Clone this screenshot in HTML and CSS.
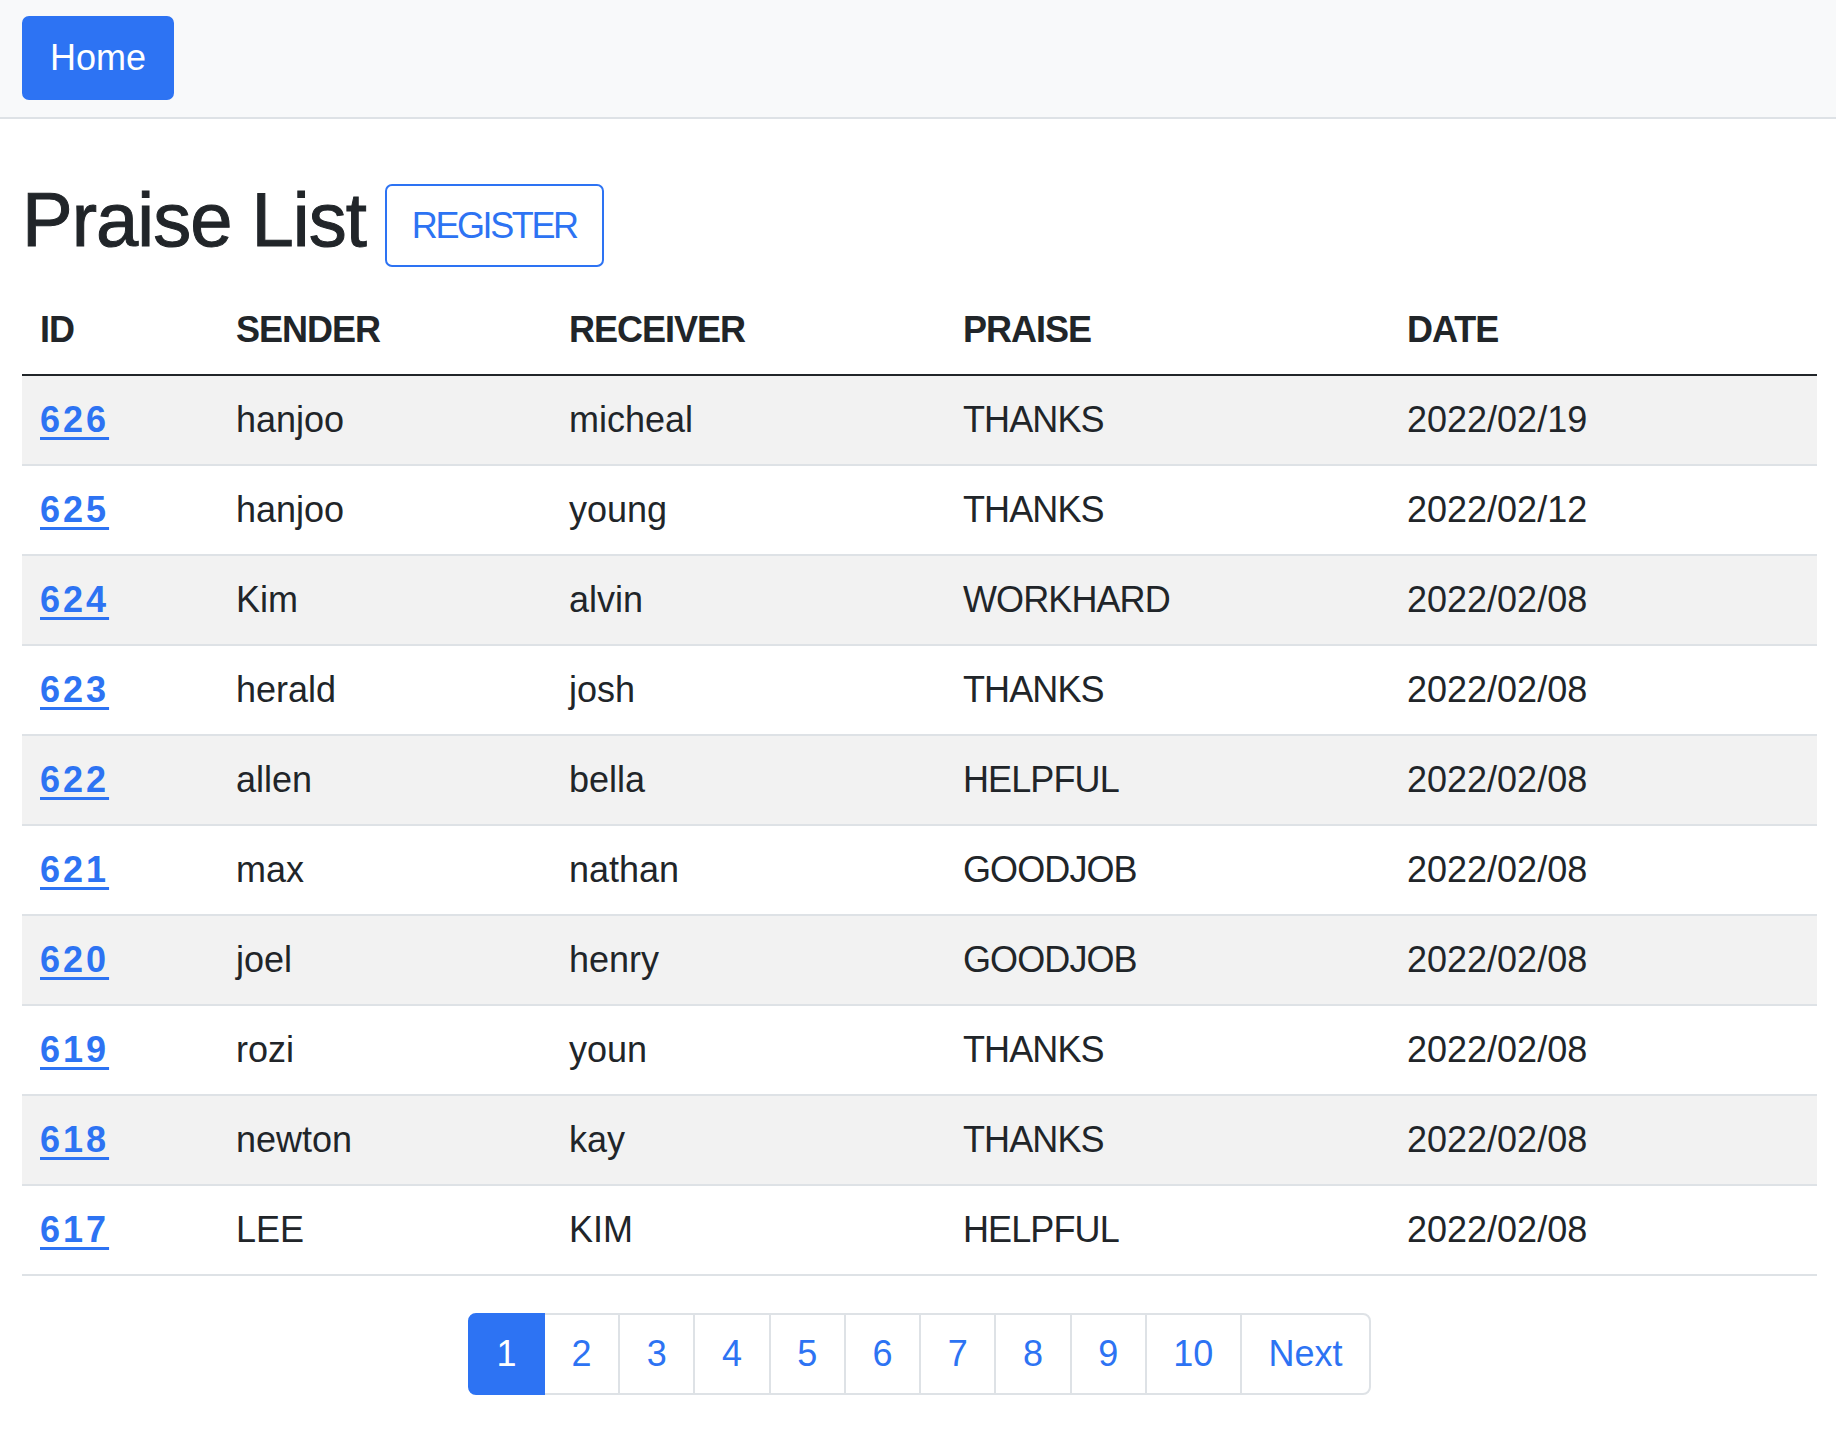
FILE: index.html
```html
<!DOCTYPE html>
<html lang="en">
<head>
<meta charset="utf-8">
<title>Praise List</title>
<link rel="stylesheet" href="styles.css">
</head>
<body>
<nav class="navbar">
  <a class="btn btn-primary" href="#">Home</a>
</nav>
<main class="container">
  <div class="title-row">
    <h2 class="title">Praise List</h2>
    <a class="btn btn-outline" href="#">REGISTER</a>
  </div>
  <table class="table">
    <colgroup>
      <col class="c-id"><col class="c-sender"><col class="c-receiver"><col class="c-praise"><col class="c-date">
    </colgroup>
    <thead>
      <tr><th>ID</th><th>SENDER</th><th>RECEIVER</th><th>PRAISE</th><th>DATE</th></tr>
    </thead>
    <tbody>
      <tr><td class="id"><a href="#">626</a></td><td>hanjoo</td><td>micheal</td><td class="praise">THANKS</td><td>2022/02/19</td></tr>
      <tr><td class="id"><a href="#">625</a></td><td>hanjoo</td><td>young</td><td class="praise">THANKS</td><td>2022/02/12</td></tr>
      <tr><td class="id"><a href="#">624</a></td><td>Kim</td><td>alvin</td><td class="praise">WORKHARD</td><td>2022/02/08</td></tr>
      <tr><td class="id"><a href="#">623</a></td><td>herald</td><td>josh</td><td class="praise">THANKS</td><td>2022/02/08</td></tr>
      <tr><td class="id"><a href="#">622</a></td><td>allen</td><td>bella</td><td class="praise">HELPFUL</td><td>2022/02/08</td></tr>
      <tr><td class="id"><a href="#">621</a></td><td>max</td><td>nathan</td><td class="praise">GOODJOB</td><td>2022/02/08</td></tr>
      <tr><td class="id"><a href="#">620</a></td><td>joel</td><td>henry</td><td class="praise">GOODJOB</td><td>2022/02/08</td></tr>
      <tr><td class="id"><a href="#">619</a></td><td>rozi</td><td>youn</td><td class="praise">THANKS</td><td>2022/02/08</td></tr>
      <tr><td class="id"><a href="#">618</a></td><td>newton</td><td>kay</td><td class="praise">THANKS</td><td>2022/02/08</td></tr>
      <tr><td class="id"><a href="#">617</a></td><td>LEE</td><td>KIM</td><td class="praise">HELPFUL</td><td>2022/02/08</td></tr>
    </tbody>
  </table>
  <ul class="pagination">
    <li class="page-item active"><a class="page-link" href="#">1</a></li>
    <li class="page-item"><a class="page-link" href="#">2</a></li>
    <li class="page-item"><a class="page-link" href="#">3</a></li>
    <li class="page-item"><a class="page-link" href="#">4</a></li>
    <li class="page-item"><a class="page-link" href="#">5</a></li>
    <li class="page-item"><a class="page-link" href="#">6</a></li>
    <li class="page-item"><a class="page-link" href="#">7</a></li>
    <li class="page-item"><a class="page-link" href="#">8</a></li>
    <li class="page-item"><a class="page-link" href="#">9</a></li>
    <li class="page-item"><a class="page-link" href="#">10</a></li>
    <li class="page-item"><a class="page-link" href="#">Next</a></li>
  </ul>
</main>
</body>
</html>
```

FILE: styles.css
```css
* { box-sizing: border-box; }

html, body {
  margin: 0;
  padding: 0;
  background: #ffffff;
  color: #212529;
  font-family: "Liberation Sans", Arial, sans-serif;
  font-size: 36px;
  line-height: 54px;
}

.navbar {
  display: flex;
  align-items: center;
  padding: 16px 22px 17px 22px;
  background: #f8f9fa;
  border-bottom: 2px solid #dee2e6;
}

.btn {
  display: inline-block;
  font-size: 36px;
  line-height: 55px;
  text-decoration: none;
  border: 2px solid transparent;
  border-radius: 7px;
  padding: 12px 26px;
}

.btn-primary {
  background: #2d73f3;
  border-color: #2d73f3;
  color: #ffffff;
  padding: 12px 26px 13px 26px;
}

.btn-outline {
  background: #ffffff;
  border-color: #2d73f3;
  color: #2d73f3;
  letter-spacing: -2.4px;
  padding: 12px 25px 12px 25px;
}

.container {
  padding: 0 19px 0 22px;
}

.title-row {
  display: flex;
  align-items: flex-start;
  gap: 19px;
  margin-top: 55px;
  margin-bottom: 18px;
}

.title {
  margin: 0;
  font-size: 76px;
  line-height: 91px;
  font-weight: 400;
  letter-spacing: -1px;
  -webkit-text-stroke: 1px #212529;
  color: #212529;
}

.title-row .btn-outline {
  margin-top: 10px;
}

.table {
  width: 100%;
  table-layout: fixed;
  border-collapse: collapse;
  margin: 0;
}

.c-id { width: 196px; }
.c-sender { width: 333px; }
.c-receiver { width: 394px; }
.c-praise { width: 444px; }
.c-date { width: auto; }

.table th {
  text-align: left;
  font-weight: 700;
  letter-spacing: -1px;
  padding: 18px 18px 17px 18px;
  border-bottom: 2px solid #212529;
  vertical-align: bottom;
}

.table td {
  padding: 17px 18px;
  border-bottom: 2px solid #dee2e6;
}

.table td.praise {
  letter-spacing: -0.9px;
}

.table tbody tr:nth-child(odd) td {
  background: #f2f2f2;
}

.table td.id a {
  color: #2d73f3;
  font-weight: 700;
  letter-spacing: 3px;
  text-decoration: underline;
  text-decoration-thickness: 3px;
  text-underline-offset: 5px;
}

.pagination {
  display: flex;
  justify-content: center;
  list-style: none;
  padding: 0;
  margin: 37px 0 0 0;
}

.page-link {
  display: block;
  padding: 12px 26.6px;
  line-height: 54px;
  font-size: 36px;
  color: #2d73f3;
  text-decoration: none;
  background: #ffffff;
  border: 2px solid #dee2e6;
  margin-left: -2px;
}

.page-item:first-child .page-link {
  margin-left: 0;
  border-radius: 8px 0 0 8px;
}

.page-item:last-child .page-link {
  border-radius: 0 8px 8px 0;
}

.page-item.active .page-link {
  background: #2d73f3;
  border-color: #2d73f3;
  color: #ffffff;
  position: relative;
}
```
